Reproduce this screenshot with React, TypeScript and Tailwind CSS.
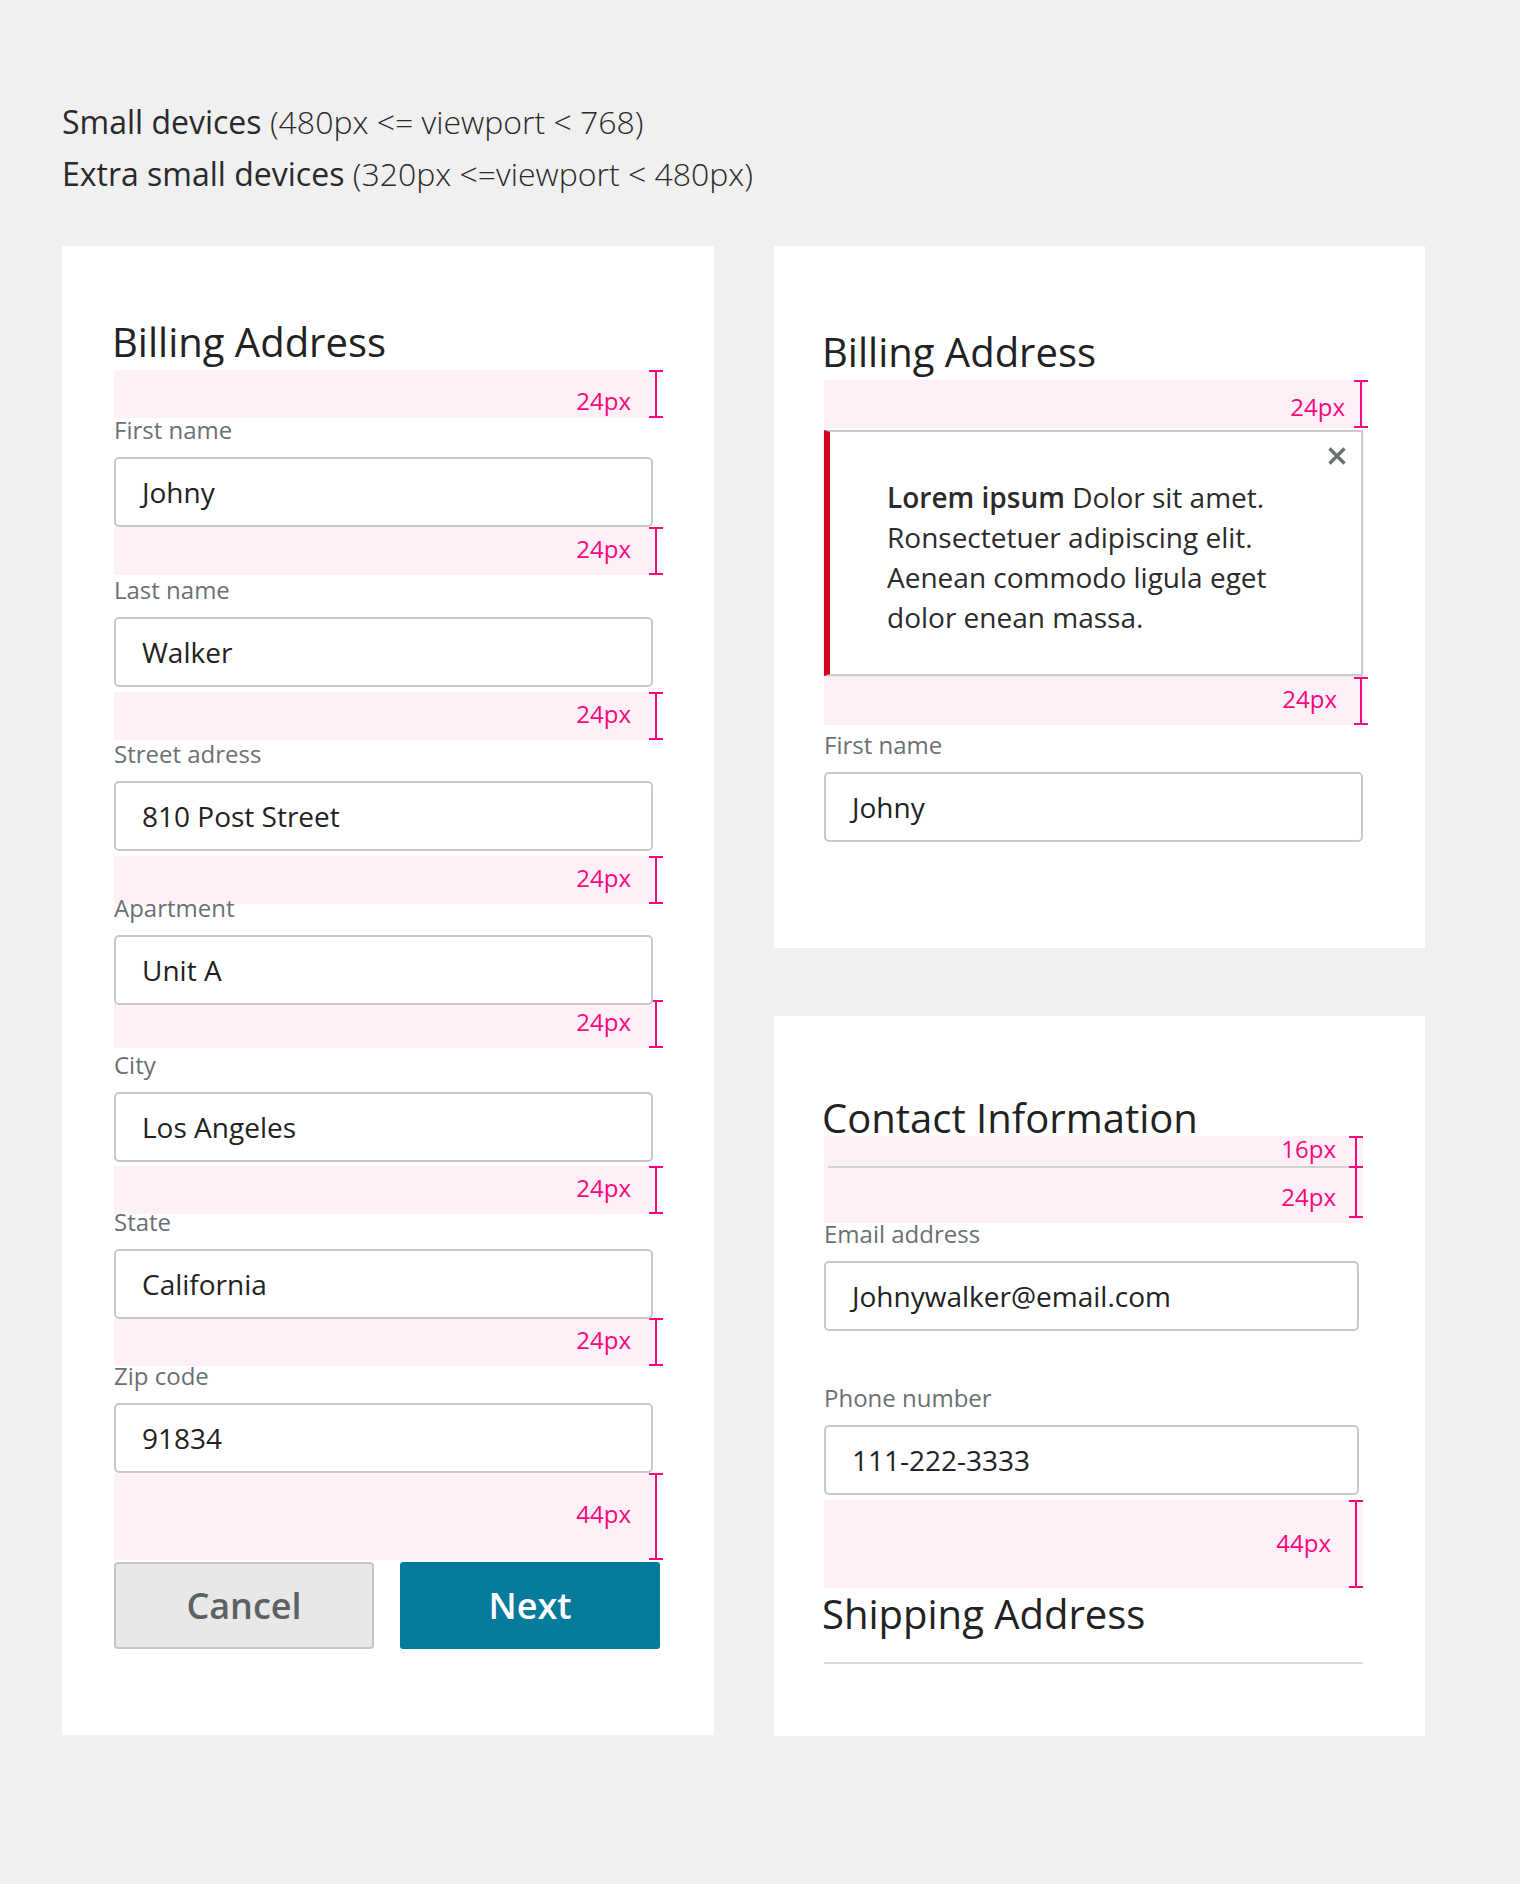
import * as React from "react";

const PINK = "bg-[#fff0f7]";

type FieldSpec = {
  label: string;
  value: string;
  barMt: string;
  labelMt: string;
};

const billing: FieldSpec[] = [
  { label: "First name", value: "Johny", barMt: "mt-[4px] pt-[14px]", labelMt: "mt-0" },
  { label: "Last name", value: "Walker", barMt: "mt-0", labelMt: "mt-[3px]" },
  { label: "Street adress", value: "810 Post Street", barMt: "mt-[5px]", labelMt: "mt-[2px]" },
  { label: "Apartment", value: "Unit A", barMt: "mt-[5px]", labelMt: "-mt-[8px]" },
  { label: "City", value: "Los Angeles", barMt: "-mt-[5px]", labelMt: "mt-[5px]" },
  { label: "State", value: "California", barMt: "mt-[4px]", labelMt: "-mt-[4px]" },
  { label: "Zip code", value: "91834", barMt: "-mt-[1px]", labelMt: "-mt-[2px]" },
];

function Bracket({ className }: { className: string }) {
  return (
    <div className={`absolute flex w-[14px] flex-col items-center ${className}`}>
      <div className="h-[2px] w-full bg-[#f7087f]" />
      <div className="w-[2px] flex-1 bg-[#f7087f]" />
      <div className="h-[2px] w-full bg-[#f7087f]" />
    </div>
  );
}

function Spacing({
  label,
  className = "pb-[5px]",
  height = "h-[48px]",
  pr = "pr-[22px]",
  bracket = "right-[-10px]",
}: {
  label: string;
  className?: string;
  height?: string;
  pr?: string;
  bracket?: string;
}) {
  return (
    <div className={`relative flex w-[539px] items-center justify-end ${PINK} ${height} ${pr} ${className}`}>
      <span className="text-[24px] leading-none text-[#f7087f]">{label}</span>
      <Bracket className={`top-0 bottom-0 ${bracket}`} />
    </div>
  );
}

function Field({
  label,
  value,
  labelMt,
  width = "w-[539px]",
}: {
  label: string;
  value: string;
  labelMt: string;
  width?: string;
}) {
  return (
    <>
      <label className={`relative block text-[24px] leading-[24px] text-[#6b7072] ${labelMt}`}>{label}</label>
      <div
        className={`relative z-10 mt-[15px] flex h-[70px] items-center rounded-[5px] border-2 border-[#c8c8c8] bg-white pl-[26px] text-[28px] text-[#222] ${width}`}
      >
        {value}
      </div>
    </>
  );
}

function Heading({ children, className = "" }: { children: React.ReactNode; className?: string }) {
  return <h2 className={`relative -ml-[2px] text-[40px] leading-[48px] text-[#222] ${className}`}>{children}</h2>;
}

export default function App() {
  return (
    <div className="min-h-[1884px] bg-[#f0f0f0] font-['Open_Sans',sans-serif]">
      <div className="pl-[62px] pt-[96px] text-[32px] leading-[52px] text-[#2a2a2a]">
        <p>
          Small devices <span className="font-light">{"(480px <= viewport < 768)"}</span>
        </p>
        <p>
          Extra small devices <span className="font-light">{"(320px <=viewport < 480px)"}</span>
        </p>
      </div>

      <div className="mt-[46px] flex gap-[60px] pl-[62px]">
        {/* small devices */}
        <section className="h-[1489px] w-[652px] bg-white pl-[52px] pt-[72px]">
          <Heading>Billing Address</Heading>
          {billing.map((f, i) => (
            <React.Fragment key={f.label}>
              <Spacing label="24px" className={i === 0 ? f.barMt : `${f.barMt} pb-[5px]`} />
              <Field label={f.label} value={f.value} labelMt={f.labelMt} />
            </React.Fragment>
          ))}
          <Spacing label="44px" height="h-[87px]" />
          <div className="mt-[2px] flex gap-[26px]">
            <button
              type="button"
              className="h-[87px] w-[260px] rounded-[4px] border-2 border-[#c6c6c6] bg-[#e8e8e8] text-[36px] font-semibold text-[#5c6263]"
            >
              Cancel
            </button>
            <button
              type="button"
              className="h-[87px] w-[260px] rounded-[3px] bg-[#067b9c] text-[36px] font-semibold text-white"
            >
              Next
            </button>
          </div>
        </section>

        {/* extra small devices */}
        <div className="flex w-[651px] flex-col gap-[68px]">
          <section className="h-[702px] bg-white pl-[50px] pt-[82px]">
            <Heading>Billing Address</Heading>
            <Spacing label="24px" className="mt-[4px] pt-[5px]" pr="pr-[18px]" bracket="right-[-5px]" />
            <div className="relative mt-[2px] w-[539px] border-2 border-l-[6px] border-[#cbcbcb] border-l-[#d9001b] pt-[45px] pb-[37px] pl-[57px] text-[28px] leading-[40px] text-[#2b2b2b] shadow-[0_2px_3px_rgba(0,0,0,0.12)]">
              <b className="font-semibold">Lorem ipsum</b> Dolor sit amet.
              <br />
              Ronsectetuer adipiscing elit.
              <br />
              Aenean commodo ligula eget
              <br />
              dolor enean massa.
              <button type="button" aria-label="Close" className="absolute right-[15px] top-[15px]">
                <svg width="18" height="18" viewBox="0 0 18 18">
                  <path d="M1.5 1.5 16.5 16.5M16.5 1.5 1.5 16.5" stroke="#696e6f" strokeWidth="3.2" />
                </svg>
              </button>
            </div>
            <Spacing label="24px" className="mt-[1px] pb-[4px]" pr="pr-[26px]" bracket="right-[-5px]" />
            <Field label="First name" value="Johny" labelMt="mt-[8px]" />
          </section>

          <section className="h-[720px] bg-white pl-[50px] pt-[78px]">
            <Heading>Contact Information</Heading>
            <div className={`relative -mt-[6px] w-[539px] ${PINK}`}>
              <div className="flex h-[30px] items-center justify-end pr-[27px] pb-[4px]">
                <span className="text-[24px] leading-none text-[#f7087f]">16px</span>
              </div>
              <div className="ml-[4px] h-[2px] bg-[#d2d2d2]" />
              <div className="flex h-[55px] items-center justify-end pr-[27px] pt-[2px]">
                <span className="text-[24px] leading-none text-[#f7087f]">24px</span>
              </div>
              <Bracket className="right-0 top-0 h-[32px]" />
              <Bracket className="right-0 top-[30px] h-[52px]" />
            </div>
            <Field label="Email address" value="Johnywalker@email.com" labelMt="-mt-[1px]" width="w-[535px]" />
            <Field label="Phone number" value="111-222-3333" labelMt="mt-[55px]" width="w-[535px]" />
            <Spacing label="44px" height="h-[88px]" className="mt-[5px] pb-[2px]" pr="pr-[32px]" bracket="right-0" />
            <Heading className="mt-[2px]">Shipping Address</Heading>
            <div className="mt-[24px] h-[2px] w-[539px] bg-[#d8d8d8]" />
          </section>
        </div>
      </div>
    </div>
  );
}
